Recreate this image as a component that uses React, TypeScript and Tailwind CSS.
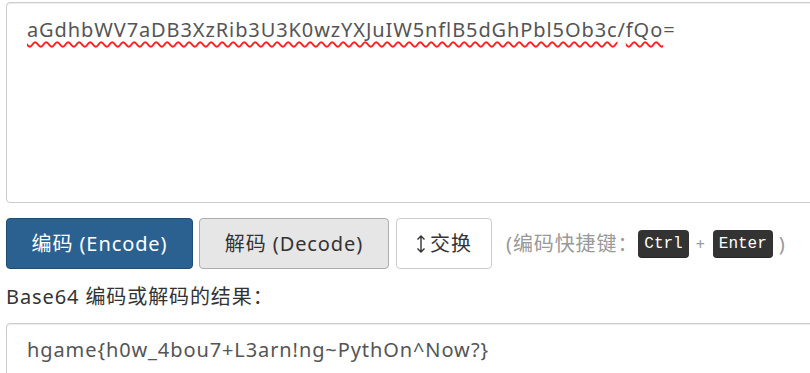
import React from 'react'

const font = { fontFamily: '"Noto Sans", "Noto Sans CJK SC", sans-serif' }

function Squiggle({ children }: { children: React.ReactNode }) {
  return (
    <span className="underline decoration-wavy decoration-[#ff2020] decoration-[1.5px] underline-offset-[4px]">
      {children}
    </span>
  )
}

function Kbd({ children }: { children: React.ReactNode }) {
  return (
    <kbd className="inline-flex h-[28px] items-center rounded-[4px] bg-[#333] px-[6px] font-['Liberation_Mono',monospace] text-[16px] tracking-normal text-white shadow-[inset_0_-1px_0_rgba(0,0,0,0.25)]">
      {children}
    </kbd>
  )
}

export default function App() {
  return (
    <div className="h-[373px] w-[810px] overflow-hidden bg-white pl-[6px] pt-[2px] text-[20px] tracking-[0.9px] text-[#555]" style={font}>
      {/* Input */}
      <div className="h-[201px] w-[830px] rounded-[4px] border border-[#ccc] px-[20px] pt-[13px] leading-[28px] shadow-[inset_0_1px_1px_rgba(0,0,0,0.075)]">
        <Squiggle>aGdhbWV7aDB3XzRib3U3K0wzYXJuIW5nflB5dGhPbl5Ob3c</Squiggle>/<Squiggle>fQo</Squiggle>=
      </div>

      {/* Actions */}
      <div className="mt-[15px] flex items-center gap-[6px]">
        <button className="h-[51px] w-[187px] rounded-[4px] border border-[#204d74] bg-[#2a6190] tracking-[0.9px] text-white">
          编码 (Encode)
        </button>
        <button className="h-[51px] w-[190px] rounded-[4px] border border-[#adadad] bg-[#e6e6e6] tracking-[0.9px] text-[#333]">
          解码 (Decode)
        </button>
        <button className="ml-[1px] flex h-[51px] w-[96px] items-center justify-center gap-[4px] rounded-[4px] border border-[#ccc] bg-white tracking-[0.9px] text-[#333]">
          <svg width="10" height="20" viewBox="0 0 10 20" fill="none" stroke="#333" strokeWidth="1.4">
            <path d="M5 2v16M1.5 5.5L5 2l3.5 3.5M1.5 14.5L5 18l3.5-3.5" />
          </svg>
          交换
        </button>
        <div className="ml-[8px] flex items-center text-[#999]">
          <span>(编码快捷键：</span>
          <Kbd>Ctrl</Kbd>
          <span className="mx-[7px] text-[16px]">+</span>
          <Kbd>Enter</Kbd>
          <span className="ml-[6px]">)</span>
        </div>
      </div>

      {/* Result */}
      <div className="mt-[13px] text-[#333]">Base64 编码或解码的结果：</div>
      <div className="mt-[11px] h-[60px] w-[830px] rounded-[4px] border border-[#ccc] px-[20px] pt-[12px] leading-[28px] shadow-[inset_0_1px_1px_rgba(0,0,0,0.075)]">
        hgame{'{'}h0w_4bou7+L3arn!ng~PythOn^Now?{'}'}
      </div>
    </div>
  )
}
